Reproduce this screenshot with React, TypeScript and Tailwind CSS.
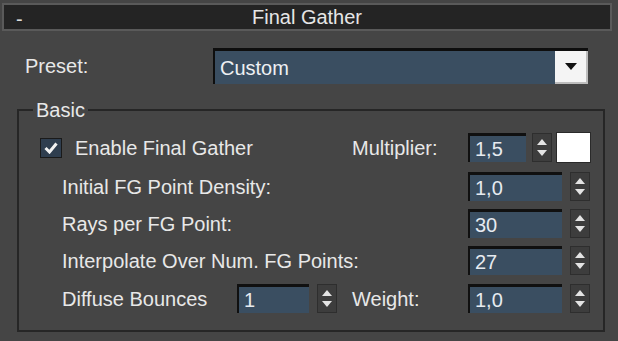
import type { ReactNode } from 'react';

const Spinner = () => (
  <div className="w-[20px] h-[29px] bg-[#3d3d3d] border border-[#2e2e2e] flex flex-col items-center justify-center gap-[5px]">
    <svg width="10" height="6" viewBox="0 0 10 6">
      <path d="M5 0 L10 6 L0 6 Z" fill="#e4e4e4" />
    </svg>
    <svg width="10" height="6" viewBox="0 0 10 6">
      <path d="M0 0 L10 0 L5 6 Z" fill="#e4e4e4" />
    </svg>
  </div>
);

const Field = ({ value, width }: { value: string; width: string }) => (
  <div
    className={`${width} h-[29px] bg-[#3a4e61] border-t-[3px] border-l-[2px] border-[#101010] flex items-center pl-[5px] text-[#e6eaf0]`}
  >
    {value}
  </div>
);

const Row = ({ children, top }: { children: ReactNode; top: string }) => (
  <div className={`flex items-center h-[29px] ${top}`}>{children}</div>
);

export default function App() {
  return (
    <div className="w-[618px] h-[341px] overflow-hidden bg-[#454545] text-[#e8e8e8] text-[20px] leading-none font-['Liberation_Sans',Arial,sans-serif]">
      {/* Rollout header */}
      <div className="pt-[3px] pl-[2px] pr-[6px]">
        <div className="relative h-[28px] bg-[#242424] border-2 border-[#5a5a5a] flex items-center justify-center">
          <span className="absolute left-[12px] top-[4px] text-[#dcdcdc]">-</span>
          <span className="text-[#e6e6e6]">Final Gather</span>
        </div>
      </div>

      {/* Preset */}
      <div className="flex items-center mt-[17px]">
        <span className="w-[213px] pl-[25px]">Preset:</span>
        <div className="w-[375px] h-[36px] bg-[#3a4e61] border-t-[3px] border-l-[2px] border-[#0e0e0e] flex items-center">
          <span className="flex-1 pl-[5px] text-[#eef0f3]">Custom</span>
          <div className="w-[33px] h-full bg-[#f4f4f4] border-b-2 border-r-2 border-[#bdbdbd] flex items-center justify-center">
            <svg width="12" height="7" viewBox="0 0 12 7">
              <path d="M0 0 L12 0 L6 7 Z" fill="#111" />
            </svg>
          </div>
        </div>
      </div>

      {/* Basic group */}
      <div className="relative ml-[17px] mt-[25px] w-[588px] h-[223px] border-2 border-[#262626]">
        <span className="absolute left-[14px] top-[-11px] px-[3px] bg-[#454545]">Basic</span>

        <Row top="mt-[22px]">
          <div className="w-[333px] flex items-center pl-[21px]">
            <div className="w-[22px] h-[20px] bg-[#2f3e4f] border border-[#1a1a1a] flex items-center justify-center">
              <svg width="14" height="12" viewBox="0 0 14 12">
                <path d="M1.5 6 L5.5 10 L12.5 1.5" stroke="#f2f2f2" strokeWidth="3" fill="none" />
              </svg>
            </div>
            <span className="ml-[13px]">Enable Final Gather</span>
          </div>
          <span className="w-[116px]">Multiplier:</span>
          <Field value="1,5" width="w-[58px]" />
          <div className="ml-[6px]">
            <Spinner />
          </div>
          <div className="ml-[4px] w-[35px] h-[31px] bg-white border border-[#2a2a2a]" />
        </Row>

        <Row top="mt-[10px]">
          <span className="w-[449px] pl-[43px]">Initial FG Point Density:</span>
          <Field value="1,0" width="w-[94px]" />
          <div className="ml-[8px]">
            <Spinner />
          </div>
        </Row>

        <Row top="mt-[8px]">
          <span className="w-[449px] pl-[43px]">Rays per FG Point:</span>
          <Field value="30" width="w-[94px]" />
          <div className="ml-[8px]">
            <Spinner />
          </div>
        </Row>

        <Row top="mt-[8px]">
          <span className="w-[449px] pl-[43px]">Interpolate Over Num. FG Points:</span>
          <Field value="27" width="w-[94px]" />
          <div className="ml-[8px]">
            <Spinner />
          </div>
        </Row>

        <Row top="mt-[9px]">
          <span className="w-[218px] pl-[43px]">Diffuse Bounces</span>
          <Field value="1" width="w-[72px]" />
          <div className="ml-[8px]">
            <Spinner />
          </div>
          <span className="ml-[15px] w-[116px]">Weight:</span>
          <Field value="1,0" width="w-[94px]" />
          <div className="ml-[8px]">
            <Spinner />
          </div>
        </Row>
      </div>
    </div>
  );
}
